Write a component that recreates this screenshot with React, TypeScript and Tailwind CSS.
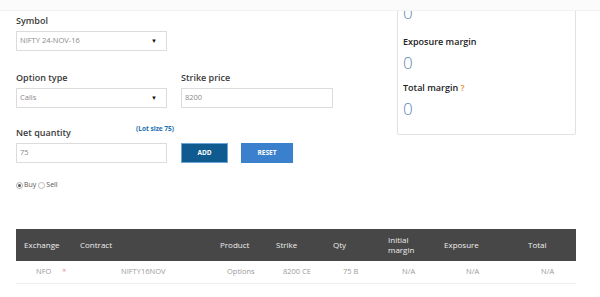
import { useState } from 'react'

const columns = [
  { key: 'exchange', label: 'Exchange' },
  { key: 'contract', label: 'Contract' },
  { key: 'product', label: 'Product' },
  { key: 'strike', label: 'Strike' },
  { key: 'qty', label: 'Qty' },
  { key: 'initial', label: 'Initial margin' },
  { key: 'exposure', label: 'Exposure' },
  { key: 'total', label: 'Total' },
]

function SelectBox({ value }: { value: string }) {
  return (
    <div className="flex h-[20px] w-[151px] items-center justify-between border border-[#dcdcdc] bg-white pl-[3px] pr-[9px]">
      <span className="text-[7.5px] text-[#8a8a8a]">{value}</span>
      <span className="text-[6px] leading-none text-[#111]">▼</span>
    </div>
  )
}

function TextBox({ value, width }: { value: string; width: string }) {
  return (
    <div className={`flex h-[20px] ${width} items-center border border-[#dcdcdc] bg-white pl-[3px]`}>
      <span className="text-[7.5px] text-[#8a8a8a]">{value}</span>
    </div>
  )
}

function Label({ children }: { children: React.ReactNode }) {
  return <div className="mb-[4px] text-[9px] font-semibold leading-[12px] text-[#3a3a3a]">{children}</div>
}

export default function App() {
  const [side, setSide] = useState<'buy' | 'sell'>('buy')

  return (
    <div className="relative h-[297px] w-[600px] overflow-hidden bg-white" style={{ fontFamily: '"Open Sans", "Liberation Sans", sans-serif' }}>
      {/* fixed header strip */}
      <div className="absolute left-0 top-0 z-10 h-[11px] w-full border-b border-[#f1f1f1] bg-[#fbfbfb]" />

      <div className="flex pl-[16px] pr-[24px]">
        <div className="flex w-[381px] flex-col pt-[15px]">
          <Label>Symbol</Label>
          <SelectBox value="NIFTY 24-NOV-16" />

          <div className="mt-[21px] flex gap-[14px]">
            <div>
              <Label>Option type</Label>
              <SelectBox value="Calls" />
            </div>
            <div>
              <Label>Strike price</Label>
              <TextBox value="8200" width="w-[152px]" />
            </div>
          </div>

          <div className="mt-[19px] flex gap-[14px]">
            <div>
              <div className="flex w-[151px] items-start justify-between">
                <Label>Net quantity</Label>
                <div className="mt-[-3px] translate-x-[7px] text-[6.5px] font-bold leading-[10px] text-[#1d6fb0]">(Lot size 75)</div>
              </div>
              <TextBox value="75" width="w-[151px]" />
            </div>
            <div className="flex items-end gap-[13px]">
              <button className="flex h-[20px] w-[47px] items-center justify-center border border-[#6aa6d8] bg-[#0f5a8f] text-[6.5px] font-bold text-white">
                ADD
              </button>
              <button className="flex h-[20px] w-[52px] items-center justify-center bg-[#3b80cd] text-[6.5px] font-bold text-white">
                RESET
              </button>
            </div>
          </div>

          <div className="mt-[17px] flex items-center text-[7px] text-[#555]">
            <label className="flex items-center" onClick={() => setSide('buy')}>
              <span className="flex h-[7px] w-[7px] items-center justify-center rounded-full border border-[#aaa] bg-white">
                {side === 'buy' && <span className="h-[3px] w-[3px] rounded-full bg-[#555]" />}
              </span>
              <span className="ml-[1px]">Buy</span>
            </label>
            <label className="ml-[2px] flex items-center" onClick={() => setSide('sell')}>
              <span className="flex h-[7px] w-[7px] items-center justify-center rounded-full border border-[#bbb] bg-white">
                {side === 'sell' && <span className="h-[3px] w-[3px] rounded-full bg-[#555]" />}
              </span>
              <span className="ml-[1px]">Sell</span>
            </label>
          </div>
        </div>

        {/* margin summary panel */}
        <div className="h-[135px] w-[179px] rounded-b-[2px] border border-[#e2e2e2] bg-white pl-[5px]">
          <div className="mt-[1px] text-[17px] font-light leading-[22px] text-[#5d88b2]">0</div>
          <div className="mt-[12px] text-[9px] font-semibold leading-[12px] text-[#222]">Exposure margin</div>
          <div className="mt-[4px] text-[17px] font-light leading-[22px] text-[#5d88b2]">0</div>
          <div className="mt-[8px] text-[9px] font-semibold leading-[12px] text-[#222]">
            Total margin <span className="text-[#f08c2a]">?</span>
          </div>
          <div className="mt-[4px] text-[17px] font-light leading-[22px] text-[#5d88b2]">0</div>
        </div>
      </div>

      {/* positions table */}
      <div className="mt-[38px] ml-[16px] w-[560px]">
        <div className="grid h-[32px] grid-cols-[56px_140px_56px_57px_55px_56px_84px_56px] items-center bg-[#474747] text-[8px] leading-[10px] text-[#eeeeee]">
          {columns.map((c) => (
            <div key={c.key} className={c.key === 'initial' ? 'w-[30px] pl-[8px]' : 'pl-[8px]'}>
              {c.label}
            </div>
          ))}
        </div>
        <div className="grid h-[23px] grid-cols-[56px_140px_56px_57px_55px_56px_84px_56px] items-center border-b border-[#eeeeee] text-[7.5px] text-[#9a9a9a]">
          <div className="flex items-center pl-[20px]">
            NFO<span className="ml-[11px] text-[7px] text-[#e87a8a]">×</span>
          </div>
          <div className="pl-[49px]">NIFTY16NOV</div>
          <div className="pl-[15px]">Options</div>
          <div className="pl-[15px]">8200 CE</div>
          <div className="pl-[18px]">75 B</div>
          <div className="pl-[22px]">N/A</div>
          <div className="pl-[30px]">N/A</div>
          <div className="pl-[21px]">N/A</div>
        </div>
      </div>
    </div>
  )
}
